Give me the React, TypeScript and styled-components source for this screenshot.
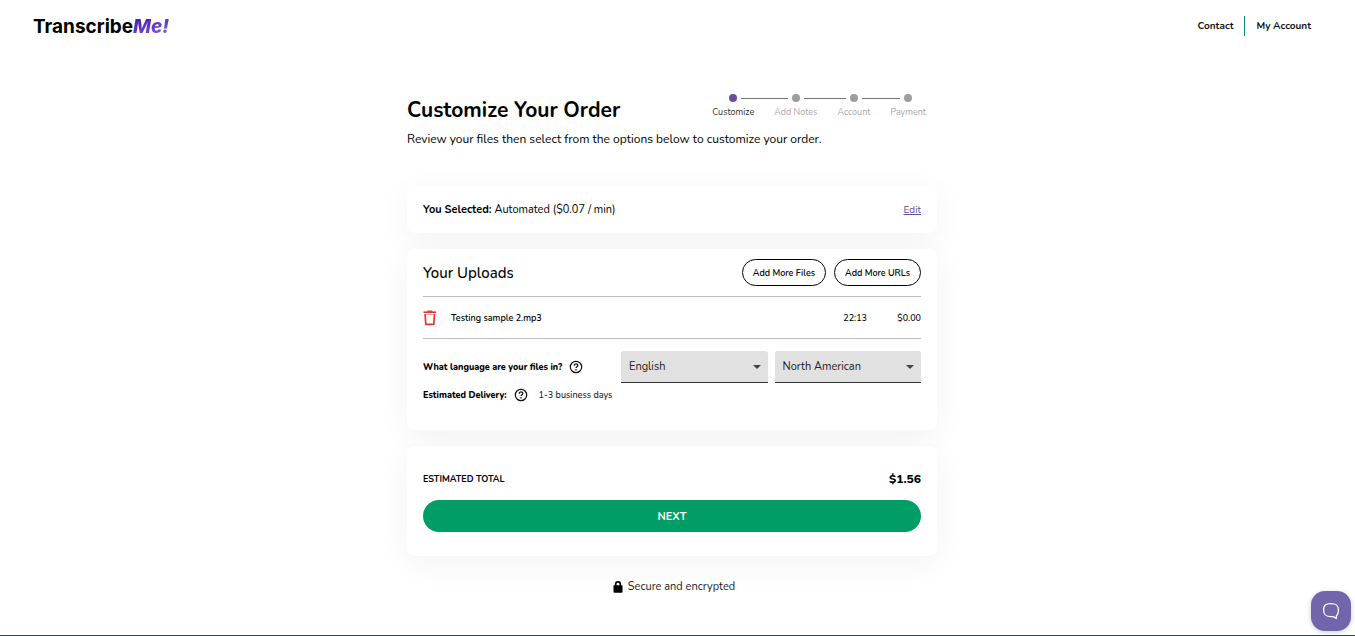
import React from 'react';
import styled, { createGlobalStyle } from 'styled-components';

const GlobalStyle = createGlobalStyle`
  *, *::before, *::after { box-sizing: border-box; }
  body {
    margin: 0;
    background: #fff;
    color: #000;
    font-family: Nunito, Lato, "Open Sans", sans-serif;
    font-size: 11px;
    line-height: 16px;
  }
  button, select { font-family: inherit; color: inherit; }
  h1, h2, p, ol, dl, dd { margin: 0; padding: 0; }
`;

const Page = styled.div`
  min-height: 100vh;
  display: flex;
  flex-direction: column;
  border-bottom: 1px solid #37474f;
`;

const Header = styled.header`
  display: flex;
  align-items: center;
  justify-content: space-between;
  height: 52px;
  padding: 0 44px 0 33px;
`;

const Logo = styled.a`
  padding-top: 2px;
  font-family: Inter, sans-serif;
  font-size: 19px;
  line-height: 24px;
  font-weight: 700;
  color: #000;
  text-decoration: none;
`;

const LogoAccent = styled.em`
  padding-right: 2px;
  font-weight: 800;
  background: linear-gradient(160deg, #4a1fb0 20%, #8a63d8 90%);
  background-clip: text;
  -webkit-background-clip: text;
  color: transparent;
`;

const Nav = styled.nav`
  display: flex;
  align-items: center;
`;

const NavLink = styled.a`
  padding: 2px 11px;
  color: #111;
  font-size: 10px;
  font-weight: 700;
  text-decoration: none;

  & + & { border-left: 1px solid #0a8f64; padding-right: 0; }
`;

const Main = styled.main`
  width: 100%;
  max-width: 541px;
  margin: 0 auto;
  padding: 40px 11px 40px 0;
`;

const TitleRow = styled.div`
  display: flex;
  justify-content: space-between;
  padding-right: 1px;
`;

const Title = styled.h1`
  padding-top: 2px;
  font-size: 21px;
  line-height: 32px;
  font-weight: 700;
`;

const Intro = styled.p`
  margin: 5px 0 38px;
  font-size: 12px;
  line-height: 16px;
`;

const Steps = styled.ol`
  display: flex;
  list-style: none;
`;

const Step = styled.li<{ $active?: boolean }>`
  font-size: 9px;
  line-height: 12px;
  color: ${p => (p.$active ? '#333' : '#aaa')};
`;

const StepTrack = styled.div`
  display: flex;
  align-items: center;
  gap: 4px;
  height: 12px;

  &::before, &::after {
    content: '';
    flex: 1;
    height: 1px;
    background: #757575;
  }
  ${Step}:first-child &::before, ${Step}:last-child &::after { background: none; }
`;

const StepDot = styled.span<{ $active?: boolean }>`
  width: 8px;
  height: 8px;
  border-radius: 50%;
  background: ${p => (p.$active ? '#674ea0' : '#9e9e9e')};
`;

const StepLabel = styled.span`
  display: block;
  padding: 2px 10px 0;
`;

const Card = styled.section`
  margin-bottom: 16px;
  padding: 0 16px;
  border-radius: 8px;
  background: #fff;
  box-shadow: 0 8px 32px rgba(0, 0, 0, 0.05);
`;

const Cards = styled.div`
  isolation: isolate;
`;

const SelectedRow = styled.div`
  display: flex;
  align-items: center;
  justify-content: space-between;
  height: 48px;
  padding-top: 2px;
`;

const EditLink = styled.a`
  font-size: 10px;
  color: #674ea0;
`;

const UploadsHeader = styled.div`
  display: flex;
  align-items: center;
  gap: 8px;
  height: 47px;
`;

const UploadsTitle = styled.h2`
  flex: 1;
  font-size: 15px;
  line-height: 20px;
  font-weight: 500;
`;

const PillButton = styled.button`
  height: 27px;
  padding: 0 10px;
  border: 1px solid #000;
  border-radius: 14px;
  background: #fff;
  font-size: 9px;
  font-weight: 600;
`;

const FileTable = styled.table`
  width: 100%;
  border-collapse: collapse;
  border-top: 1px solid #bdbdbd;
  border-bottom: 1px solid #bdbdbd;
  font-size: 9px;
`;

const Cell = styled.td<{ $width?: number }>`
  width: ${p => (p.$width ? `${p.$width}px` : 'auto')};
  height: 42px;
  padding: 0;
  text-align: ${p => (p.$width ? 'right' : 'left')};
  font-weight: ${p => (p.$width ? 500 : 600)};
`;

const IconCell = styled.td`
  width: 28px;
  padding: 0;
`;

const IconButton = styled.button`
  display: block;
  padding: 0;
  border: 0;
  background: none;
  line-height: 0;
`;

const Options = styled.div`
  padding: 12px 0 23px;
`;

const OptionRow = styled.div`
  display: flex;
  align-items: center;
  font-size: 9px;
`;

const OptionLabel = styled.label`
  font-weight: 800;
  margin-right: 7px;
`;

const SelectGroup = styled.div`
  display: flex;
  gap: 7px;
  width: 300px;
  margin-left: auto;
`;

const SelectBox = styled.div`
  position: relative;
  flex: 1;
`;

const Select = styled.select`
  display: block;
  width: 100%;
  height: 32px;
  padding: 0 24px 0 8px;
  border: 0;
  border-bottom: 1px solid #333;
  border-radius: 3px 3px 0 0;
  background: #e1e1e1;
  color: #222;
  font-size: 11px;
  appearance: none;
`;

const Caret = styled.svg`
  position: absolute;
  right: 7px;
  top: 14px;
  pointer-events: none;
`;

const Delivery = styled.dl`
  display: flex;
  align-items: center;
  height: 24px;
  font-size: 9px;
`;

const DeliveryTerm = styled.dt`
  margin-right: 7px;
  font-weight: 800;
`;

const DeliveryValue = styled.dd`
  && { margin-left: 11px; }
  color: #222;
  font-weight: 500;
`;

const TotalCard = styled(Card)`
  padding-bottom: 24px;
`;

const TotalRow = styled.div`
  display: flex;
  align-items: center;
  justify-content: space-between;
  padding: 23px 0 11px;
  font-size: 9px;
  line-height: 20px;
  font-weight: 700;
`;

const TotalAmount = styled.strong`
  font-size: 12px;
  font-weight: 800;
`;

const NextButton = styled.button`
  display: block;
  width: 100%;
  height: 32px;
  border: 0;
  border-radius: 16px;
  background: #009e66;
  color: #fff;
  font-size: 11px;
  font-weight: 700;
`;

const Secure = styled.p`
  display: flex;
  align-items: center;
  justify-content: center;
  gap: 5px;
  padding: 7px 0 0 4px;
  color: #222;
`;

const ChatButton = styled.button`
  position: fixed;
  right: 4px;
  bottom: 5px;
  display: flex;
  align-items: center;
  justify-content: center;
  width: 40px;
  height: 40px;
  padding: 0;
  border: 0;
  border-radius: 14px;
  background: #7265ab;
  box-shadow: 0 1px 5px rgba(0, 0, 0, 0.2);
`;

const HelpIcon = () => (
  <svg width="14" height="14" viewBox="0 0 14 14" fill="none" stroke="#111" role="img" aria-label="Help">
    <circle cx="7" cy="7" r="5.7" strokeWidth="1.2" />
    <path d="M5.2 5.7c0-2.4 3.6-2.3 3.6-.2 0 1.2-1.8 1.3-1.8 2.6" strokeWidth="1.3" />
    <path d="M7 9.1v1.3" strokeWidth="1.3" />
  </svg>
);

const TrashIcon = () => (
  <svg width="14" height="16" viewBox="0 0 14 16" fill="none" stroke="#dc3a2a">
    <path d="M.5 2.2h12.6" strokeWidth="1.6" />
    <path d="M4.4 1.2h4.8" strokeWidth="1.4" />
    <path d="M2.1 4.2l.7 10.1h8l.7-10.1" strokeWidth="1.7" strokeLinejoin="round" />
    <path d="M1.4 4.3h10.8" strokeWidth=".6" />
  </svg>
);

const LockIcon = () => (
  <svg width="10" height="12" viewBox="0 0 10 12">
    <rect x=".5" y="4.3" width="9" height="7.5" rx="1" fill="#000" />
    <path d="M2.7 5V3.2a2.3 2.3 0 0 1 4.6 0V5" fill="none" stroke="#000" strokeWidth="1.7" />
  </svg>
);

const ChatIcon = () => (
  <svg width="18" height="18" viewBox="0 0 18 18" fill="none" stroke="#fff" strokeWidth="1.3" strokeLinejoin="round">
    <path d="M9 1.6c5.4 0 7.4 1.7 7.4 6.5 0 3-.6 4.7-2.1 5.6v2.8l-3.2-1.9c-.6.1-1.3.1-2.1.1-5.4 0-7.4-1.8-7.4-6.600S3.600 1.600 9 1.600z" />
  </svg>
);

const steps = ['Customize', 'Add Notes', 'Account', 'Payment'];
const files = [{ name: 'Testing sample 2.mp3', length: '22:13', price: '$0.00' }];

function Dropdown({ id, label, options }: { id: string; label?: string; options: string[] }) {
  return (
    <SelectBox>
      <Select id={id} aria-label={label}>
        {options.map(option => <option key={option}>{option}</option>)}
      </Select>
      <Caret width="8" height="4" viewBox="0 0 8 4"><path d="M0 0h8L4 4z" fill="#444" /></Caret>
    </SelectBox>
  );
}

export default function App() {
  return (
    <Page>
      <GlobalStyle />
      <Header>
        <Logo href="#">Transcribe<LogoAccent>Me!</LogoAccent></Logo>
        <Nav>
          <NavLink href="#contact">Contact</NavLink>
          <NavLink href="#account">My Account</NavLink>
        </Nav>
      </Header>
      <Main>
        <TitleRow>
          <Title>Customize Your Order</Title>
          <Steps>
            {steps.map((step, i) => (
              <Step key={step} $active={i === 0} aria-current={i === 0 ? 'step' : undefined}>
                <StepTrack><StepDot $active={i === 0} /></StepTrack>
                <StepLabel>{step}</StepLabel>
              </Step>
            ))}
          </Steps>
        </TitleRow>
        <Intro>Review your files then select from the options below to customize your order.</Intro>
        <Cards>
          <Card>
            <SelectedRow>
              <p><b>You Selected:</b> Automated ($0.07 / min)</p>
              <EditLink href="#edit">Edit</EditLink>
            </SelectedRow>
          </Card>
          <Card>
            <UploadsHeader>
              <UploadsTitle>Your Uploads</UploadsTitle>
              <PillButton>Add More Files</PillButton>
              <PillButton>Add More URLs</PillButton>
            </UploadsHeader>
            <FileTable aria-label="Your uploads">
              <tbody>
                {files.map(file => (
                  <tr key={file.name}>
                    <IconCell>
                      <IconButton aria-label={`Remove ${file.name}`}><TrashIcon /></IconButton>
                    </IconCell>
                    <Cell>{file.name}</Cell>
                    <Cell $width={54}>{file.length}</Cell>
                    <Cell $width={54}>{file.price}</Cell>
                  </tr>
                ))}
              </tbody>
            </FileTable>
            <Options>
              <OptionRow>
                <OptionLabel htmlFor="language">What language are your files in?</OptionLabel>
                <HelpIcon />
                <SelectGroup>
                  <Dropdown id="language" options={['English', 'Spanish']} />
                  <Dropdown id="accent" label="Accent" options={['North American', 'British']} />
                </SelectGroup>
              </OptionRow>
              <Delivery>
                <DeliveryTerm>Estimated Delivery:</DeliveryTerm>
                <HelpIcon />
                <DeliveryValue>1-3 business days</DeliveryValue>
              </Delivery>
            </Options>
          </Card>
          <TotalCard>
            <TotalRow>
              <span>ESTIMATED TOTAL</span>
              <TotalAmount>$1.56</TotalAmount>
            </TotalRow>
            <NextButton>NEXT</NextButton>
          </TotalCard>
        </Cards>
        <Secure><LockIcon />Secure and encrypted</Secure>
      </Main>
      <ChatButton aria-label="Open chat"><ChatIcon /></ChatButton>
    </Page>
  );
}
